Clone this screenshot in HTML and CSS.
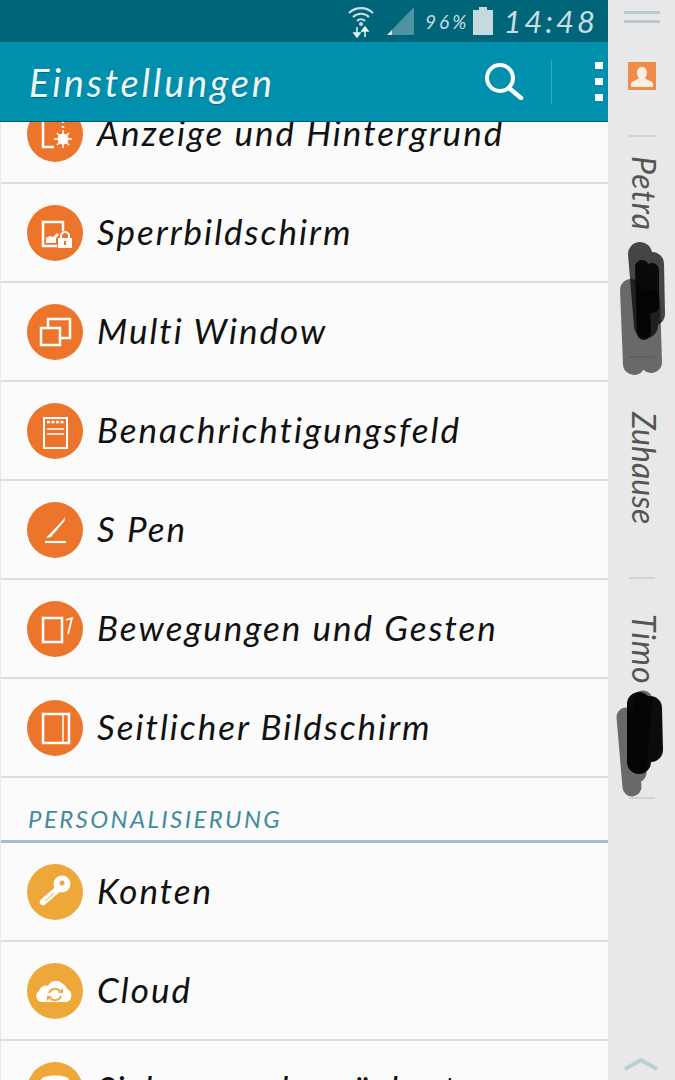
FILE: index.html
```html
<!DOCTYPE html>
<html lang="de">
<head>
    <meta charset="utf-8" />
    <title>Einstellungen</title>
    <link rel="stylesheet" href="styles.css">
</head>
<body>
    <div class="screen">
        <div class="main">
            <div class="statusbar">
                <svg class="ic-wifi" width="30" height="34" viewBox="0 0 30 34">
                    <path d="M3 9a17 17 0 0 1 24 0M7 13a11.500 11.500 0 0 1 16 0M11 17a6 6 0 0 1 8 0" fill="none" stroke="#c9dde2" stroke-width="2.200"/>
                    <circle cx="15" cy="20" r="2" fill="#c9dde2"/>
                    <path d="M11 23v9M8 29l3 4 3-4zM19 33v-9M16 27l3-4 3 4z" fill="#e8f0f2" stroke="#e8f0f2" stroke-width="1.500"/>
                </svg>
                <svg class="ic-signal" width="28" height="30" viewBox="0 0 28 30">
                    <path d="M27 1v28H0z" fill="#4d93a4"/>
                    <path d="M5 24v5H0z" fill="#d5e4e8"/>
                </svg>
                <span class="percent">96%</span>
                <svg class="ic-battery" width="20" height="28" viewBox="0 0 20 28">
                    <path d="M6 0h8v3h6v25H0V3h6z" fill="#c6d9de"/>
                </svg>
                <span class="clock">14:48</span>
            </div>
            <div class="appbar">
                <span class="title">Einstellungen</span>
                <svg class="ic-search" width="40" height="38" viewBox="0 0 40 38">
                    <circle cx="16" cy="16" r="13" fill="none" stroke="#fff" stroke-width="4"/>
                    <path d="M25 26l12 10" stroke="#fff" stroke-width="4.500" stroke-linecap="round"/>
                </svg>
                <span class="appbar-sep"></span>
                <span class="more"><i></i><i></i><i></i></span>
            </div>
            <div class="list">
                <div class="row">
                    <svg class="badge" viewBox="0 0 56 56"><circle cx="28" cy="28" r="28" fill="#ec752b"/>
                        <path d="M16 14v27h11M36 14v3M36 20v2" fill="none" stroke="#fff" stroke-width="2.500"/>
                        <circle cx="36" cy="33" r="5.500" fill="#fff"/>
                        <path d="M36 24v18M27 33h18M30 27l12 12M42 27L30 39" stroke="#fff" stroke-width="1.500"/>
                    </svg>
                    <span class="label">Anzeige und Hintergrund</span>
                </div>
                <div class="row">
                    <svg class="badge" viewBox="0 0 56 56"><circle cx="28" cy="28" r="28" fill="#ec752b"/>
                        <path d="M30 41H16V17h20v9" fill="none" stroke="#fff" stroke-width="2.500"/>
                        <path d="M19 38v-5l4-2 3 1 4-4 2 2-3 3v5z" fill="#fff"/>
                        <rect x="31" y="33" width="14" height="10" fill="#fff"/>
                        <path d="M34 33v-2a4 4 0 0 1 8 0v2" fill="none" stroke="#fff" stroke-width="2"/>
                        <rect x="37" y="36" width="2" height="4" fill="#ec752b"/>
                    </svg>
                    <span class="label">Sperrbildschirm</span>
                </div>
                <div class="row">
                    <svg class="badge" viewBox="0 0 56 56"><circle cx="28" cy="28" r="28" fill="#ec752b"/>
                        <path d="M21 23v-8h22v19h-10" fill="none" stroke="#fff" stroke-width="2.500"/>
                        <rect x="14" y="24" width="19" height="17" fill="none" stroke="#fff" stroke-width="2.500"/>
                    </svg>
                    <span class="label">Multi Window</span>
                </div>
                <div class="row">
                    <svg class="badge" viewBox="0 0 56 56"><circle cx="28" cy="28" r="28" fill="#ec752b"/>
                        <rect x="17" y="15" width="23" height="30" fill="none" stroke="#fff" stroke-width="2"/>
                        <path d="M20 19h17" stroke="#fff" stroke-width="2.500" stroke-dasharray="3 1.500"/>
                        <path d="M20 26h17M20 31h17" stroke="#fff" stroke-width="1.600"/>
                    </svg>
                    <span class="label">Benachrichtigungsfeld</span>
                </div>
                <div class="row">
                    <svg class="badge" viewBox="0 0 56 56"><circle cx="28" cy="28" r="28" fill="#ec752b"/>
                        <path d="M18 40h21" stroke="#fff" stroke-width="2.200"/>
                        <path d="M19 36L36 18l2-3-.5 4L24 35z" fill="#fff"/>
                    </svg>
                    <span class="label">S Pen</span>
                </div>
                <div class="row">
                    <svg class="badge" viewBox="0 0 56 56"><circle cx="28" cy="28" r="28" fill="#ec752b"/>
                        <rect x="16" y="17" width="19" height="24" fill="none" stroke="#fff" stroke-width="2.500"/>
                        <path d="M39 19l6-2-1 4-3 12" fill="none" stroke="#fff" stroke-width="1.800"/>
                    </svg>
                    <span class="label">Bewegungen und Gesten</span>
                </div>
                <div class="row">
                    <svg class="badge" viewBox="0 0 56 56"><circle cx="28" cy="28" r="28" fill="#ec752b"/>
                        <rect x="16" y="14" width="26" height="29" fill="none" stroke="#fff" stroke-width="2.500"/>
                        <path d="M36 14v29" stroke="#fff" stroke-width="1.600"/>
                    </svg>
                    <span class="label">Seitlicher Bildschirm</span>
                </div>
                <div class="section">PERSONALISIERUNG</div>
                <div class="row">
                    <svg class="badge" viewBox="0 0 56 56"><circle cx="28" cy="28" r="28" fill="#eea83a"/>
                        <circle cx="35" cy="20" r="8.500" fill="#fff"/>
                        <path d="M30 26L16 38" stroke="#fff" stroke-width="6.500" stroke-linecap="round"/>
                        <path d="M27 29l-9 8" stroke="#eea83a" stroke-width="1"/>
                        <circle cx="35" cy="19" r="2.500" fill="#eea83a"/>
                    </svg>
                    <span class="label">Konten</span>
                </div>
                <div class="row">
                    <svg class="badge" viewBox="0 0 56 56"><circle cx="28" cy="28" r="28" fill="#eea83a"/>
                        <path d="M16 39a6 6 0 0 1-4-11 7 7 0 0 1 9-5 9 9 0 0 1 15-2 7 7 0 0 1 4 5 7 7 0 0 1 0 13z" fill="#fff"/>
                        <path d="M22 30a6.500 6.500 0 0 1 11-2M34 33a6.500 6.500 0 0 1-11 2" fill="none" stroke="#eea83a" stroke-width="2"/>
                        <path d="M36 25v5h-5zM20 38v-5h5z" fill="#eea83a"/>
                    </svg>
                    <span class="label">Cloud</span>
                </div>
                <div class="row">
                    <svg class="badge" viewBox="0 0 56 56"><circle cx="28" cy="28" r="28" fill="#eea83a"/>
                        <path d="M14 18c0-6 28-6 28 0v8H14z" fill="#fff"/>
                    </svg>
                    <span class="label">Sichern und zurücksetzen</span>
                </div>
            </div>
        </div>
        <div class="panel">
            <div class="handle"><i></i><i></i></div>
            <svg class="ic-contact" width="28" height="28" viewBox="0 0 28 28">
                <rect width="28" height="28" fill="#ef8c4a"/>
                <path d="M3 25v-3c0-3 7-4 8-6-3-3-3-11 3-11s6 8 3 11c1 2 8 3 8 6v3z" fill="#fbeee4"/>
            </svg>
            <div class="tab tab-first"><span class="tab-name">Petra</span></div>
            <div class="tab tab-home"><span class="tab-name">Zuhause</span></div>
            <div class="tab tab-last"><span class="tab-name">Timo</span></div>
            <svg class="chevron" width="36" height="14" viewBox="0 0 36 14">
                <path d="M2 12L18 3l16 9" fill="none" stroke="#bccfd6" stroke-width="4"/>
            </svg>
            <svg class="scribble scribble-a" width="56" height="140" viewBox="0 0 56 140">
                <path d="M15 50l3 74M33 60l2 62" stroke="#000" stroke-opacity=".55" stroke-width="22" stroke-linecap="round" fill="none"/>
                <path d="M24 14l6 72M36 24l1 50" stroke="#000" stroke-opacity=".7" stroke-width="24" stroke-linecap="round" fill="none"/>
                <path d="M26 27l2 66M36 30v36" stroke="#000" stroke-opacity=".85" stroke-width="14" stroke-linecap="round" fill="none"/>
            </svg>
            <svg class="scribble scribble-b" width="52" height="114" viewBox="0 0 52 114">
                <path d="M10 29l6 70M27 12l-6 73" stroke="#000" stroke-opacity=".55" stroke-width="19" stroke-linecap="round" fill="none"/>
                <path d="M23 16v58M34 20l1 42" stroke="#000" stroke-opacity=".95" stroke-width="24" stroke-linecap="round" fill="none"/>
            </svg>
        </div>
    </div>
</body>
</html>
```

FILE: styles.css
```css
html, body {
    margin: 0;
    padding: 0;
    height: 1080px;
    overflow: hidden;
}
body {
    font-family: "Lato", "Noto Sans", cursive;
    font-style: italic;
    color: #111;
}
.screen {
    display: flex;
    width: 675px;
    height: 1080px;
    overflow: hidden;
    position: relative;
}
.main {
    width: 608px;
    height: 1080px;
    overflow: hidden;
    display: flex;
    flex-direction: column;
    background: #fbfbfb;
}

/* top bars */
.statusbar {
    position: relative;
    z-index: 2;
    height: 42px;
    flex: none;
    display: flex;
    align-items: center;
    justify-content: flex-end;
    padding-right: 12px;
    background: #006579;
    color: #c9dde2;
}
.ic-wifi { margin-right: 11px; }
.ic-signal { margin-right: 10px; }
.percent {
    font-size: 19px;
    letter-spacing: 3px;
    margin-right: 4px;
}
.ic-battery { margin-right: 10px; }
.clock {
    font-size: 31px;
    letter-spacing: 3px;
    margin-right: -2px;
}
.appbar {
    position: relative;
    z-index: 2;
    height: 79px;
    flex: none;
    display: flex;
    align-items: center;
    padding-left: 29px;
    background: #0090ae;
    border-bottom: 1px solid #005a70;
    color: #eef6f8;
}
.title {
    font-size: 38px;
    letter-spacing: 2.800px;
    width: 455px;
    text-shadow: 0 1px 1px #00687f;
}
.ic-search { margin-bottom: 2px; }
.appbar-sep {
    width: 1px;
    height: 44px;
    margin-left: 27px;
    background: #33a7c0;
}
.more {
    display: flex;
    flex-direction: column;
    gap: 9px;
    margin-left: 43px;
}
.more i {
    display: block;
    width: 8px;
    height: 7px;
    background: #fff;
}

/* list */
.list {
    margin-top: -37px;
    border-left: 1px solid #e6e8ea;
}
.row {
    height: 97px;
    display: flex;
    align-items: center;
    gap: 14px;
    padding-left: 26px;
    border-bottom: 2px solid #d6dfe4;
}
.badge {
    width: 56px;
    height: 56px;
    flex: none;
}
.label {
    font-size: 35px;
    letter-spacing: 2px;
    white-space: nowrap;
    margin-bottom: 3px;
}
.section {
    height: 65px;
    padding-left: 27px;
    padding-bottom: 7px;
    display: flex;
    align-items: flex-end;
    box-sizing: border-box;
    font-size: 24px;
    letter-spacing: 2.400px;
    color: #3f8c9f;
    border-bottom: 3px solid #a3c0c9;
}

/* side panel */
.panel {
    flex: 1;
    position: relative;
    display: flex;
    flex-direction: column;
    align-items: center;
    background: #e8e8e8;
    color: #555;
}
.handle {
    display: flex;
    flex-direction: column;
    gap: 6px;
    margin-top: 11px;
}
.handle i {
    display: block;
    width: 36px;
    height: 3px;
    background: #b9cbd1;
}
.ic-contact { margin-top: 39px; }
.tab {
    width: 26px;
    display: flex;
    flex-direction: column;
    align-items: center;
    height: 221px;
    border-top: 2px solid #cfd3d5;
    box-sizing: border-box;
}
.tab-first { margin-top: 45px; }
.tab-last { border-bottom: 2px solid #cfd3d5; height: 222px; }
.tab-name {
    writing-mode: vertical-rl;
    font-size: 32px;
    line-height: 32px;
    letter-spacing: 1px;
    margin-top: 19px;
    margin-left: 4px;
}
.tab-home .tab-name { margin-top: 54px; letter-spacing: 0; }
.tab-last .tab-name { margin-top: 35px; }
.chevron {
    position: absolute;
    left: 15px;
    top: 1057px;
}
.scribble { position: absolute; }
.scribble-a { left: 8px; top: 240px; }
.scribble-b { left: 8px; top: 688px; }
```
